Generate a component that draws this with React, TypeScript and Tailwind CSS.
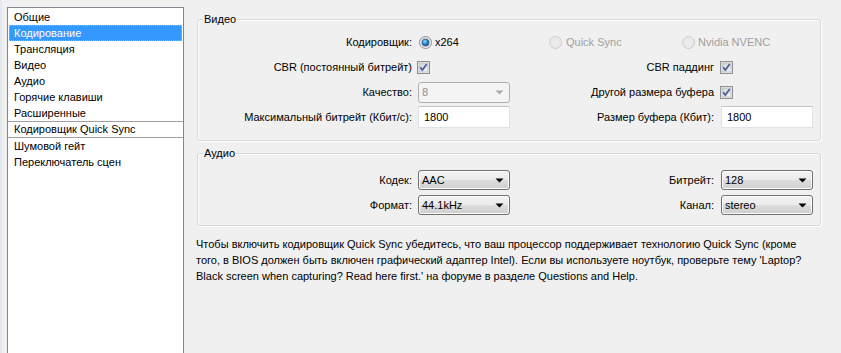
import React from "react"

const navItems = [
  "Общие",
  "Кодирование",
  "Трансляция",
  "Видео",
  "Аудио",
  "Горячие клавиши",
  "Расширенные",
]

function Radio({ checked, disabled }: { checked?: boolean; disabled?: boolean }) {
  return (
    <svg width="13" height="13" viewBox="0 0 13 13" className="shrink-0">
      <defs>
        <linearGradient id="rbg" x1="0" y1="0" x2="1" y2="1">
          <stop offset="0" stopColor="#e6e6e6" />
          <stop offset="1" stopColor="#ffffff" />
        </linearGradient>
        <radialGradient id="rdot" cx="0.4" cy="0.35" r="0.7">
          <stop offset="0" stopColor="#9be0ff" />
          <stop offset="0.5" stopColor="#2a8fd0" />
          <stop offset="1" stopColor="#0b4d86" />
        </radialGradient>
      </defs>
      <circle cx="6.5" cy="6.5" r="6" fill={disabled ? "#f4f4f4" : "url(#rbg)"} stroke={disabled ? "#c9c9c9" : "#8e8f8f"} />
      {!disabled && <circle cx="6.5" cy="6.5" r="4.5" fill="none" stroke="#d0d0d0" strokeWidth="1" />}
      {disabled && <circle cx="6.5" cy="6.5" r="4.5" fill="#ececec" stroke="#e2e2e2" strokeWidth="1" />}
      {checked && <circle cx="6.5" cy="6.5" r="3.5" fill="url(#rdot)" stroke="#1b4e79" strokeWidth="0.6" />}
    </svg>
  )
}

function Checkbox() {
  return (
    <svg width="13" height="13" viewBox="0 0 13 13" className="shrink-0">
      <defs>
        <linearGradient id="cbg" x1="0" y1="0" x2="1" y2="1">
          <stop offset="0" stopColor="#cbcfd5" />
          <stop offset="1" stopColor="#f6f6f6" />
        </linearGradient>
      </defs>
      <rect x="0.5" y="0.5" width="12" height="12" fill="#f4f4f4" stroke="#8e8f8f" />
      <rect x="2" y="2" width="9" height="9" fill="url(#cbg)" stroke="#b7bcc3" strokeWidth="0.8" />
      <path d="M3.2 6.3 L5.3 9 L9.8 3" fill="none" stroke="#4a5f97" strokeWidth="1.7" />
    </svg>
  )
}

function Arrow({ disabled }: { disabled?: boolean }) {
  return (
    <svg width="9" height="5" viewBox="0 0 9 5" className="shrink-0">
      <path d="M0.5 0.5 L8.5 0.5 L4.5 4.5 Z" fill={disabled ? "#a8a8a8" : "#000"} />
    </svg>
  )
}

function Combo({ value, disabled }: { value: string; disabled?: boolean }) {
  if (disabled) {
    return (
      <div className="flex h-[21px] w-[92px] items-center justify-between rounded-[3px] border border-[#adb2b5] bg-[#f4f4f4] pl-[3px] pr-[5px] text-[#8d8d8d]">
        <span>{value}</span>
        <Arrow disabled />
      </div>
    )
  }
  return (
    <div className="flex h-[20px] w-[92px] items-center justify-between rounded-[3px] border border-[#707070] bg-[linear-gradient(#f2f2f2_0%,#ebebeb_50%,#dddddd_50%,#cfcfcf_100%)] pl-[3px] pr-[5px] shadow-[inset_0_0_0_1px_#fcfcfc]">
      <span>{value}</span>
      <Arrow />
    </div>
  )
}

function Edit({ value }: { value: string }) {
  return (
    <div className="flex h-[22px] w-[92px] items-center border border-[#dfe3e8] border-t-[#c3c7cc] bg-white pl-[5px]">
      {value}
    </div>
  )
}

function Row({ label, left, rightLabel, right }: { label: string; left: React.ReactNode; rightLabel?: string; right?: React.ReactNode }) {
  return (
    <div className="flex h-[22px] items-center">
      <div className="w-[214px] shrink-0 text-right">{label}</div>
      <div className="ml-[6px] w-[92px] shrink-0 flex items-center">{left}</div>
      <div className="w-[204px] shrink-0 text-right">{rightLabel}</div>
      <div className="ml-[7px] w-[92px] shrink-0 flex items-center">{right}</div>
    </div>
  )
}

export default function App() {
  return (
    <div className="flex h-[353px] w-[841px] overflow-hidden bg-[#f0f0f0] font-['Liberation_Sans',Arial,sans-serif] text-[11px] text-black">
      <div className="w-[2px] shrink-0 bg-[#e2e9f0]" />

      {/* list */}
      <div className="ml-[5px] mt-[7px] w-[177px] shrink-0 border border-b-0 border-[#828790] bg-white px-[1px] pt-[1px]">
        {navItems.map((item) =>
          item === "Кодирование" ? (
            <div key={item} className="flex h-[16px] items-center border border-dotted border-[#f2a65a] bg-[#3399ff] pl-[4px] text-white">
              {item}
            </div>
          ) : (
            <div key={item} className="flex h-[16px] items-center pl-[5px]">
              {item}
            </div>
          )
        )}
        <div className="-mx-[1px] flex h-[17px] items-center border-y border-[#a0a0a0] pl-[6px]">Кодировщик Quick Sync</div>
        <div className="flex h-[16px] items-center pl-[5px]">Шумовой гейт</div>
        <div className="flex h-[16px] items-center pl-[5px]">Переключатель сцен</div>
      </div>

      {/* settings */}
      <div className="ml-[12px] flex w-[626px] shrink-0 flex-col pt-[13px]">
        <fieldset className="ml-[1px] w-[624px] rounded-[3px] border border-[#d5d9de] px-0 pb-[12px] pt-[5px] shadow-[inset_1px_1px_0_#fff,1px_1px_0_#fff]">
          <legend className="ml-[5px] bg-[#f0f0f0] px-[1px] leading-[13px]">Видео</legend>
          <div className="flex flex-col gap-[3px]">
            <div className="flex h-[22px] items-center">
              <div className="w-[214px] shrink-0 text-right">Кодировщик:</div>
              <div className="ml-[7px] flex w-[130px] shrink-0 items-center gap-[3px]">
                <Radio checked />
                <span>x264</span>
              </div>
              <div className="flex w-[133px] shrink-0 items-center gap-[4px] text-[#a0a0a0]">
                <Radio disabled />
                <span>Quick Sync</span>
              </div>
              <div className="flex items-center gap-[3px] text-[#a0a0a0]">
                <Radio disabled />
                <span>Nvidia NVENC</span>
              </div>
            </div>
            <Row
              label="CBR (постоянный битрейт)"
              left={<div className="-ml-[1px]"><Checkbox /></div>}
              rightLabel="CBR паддинг"
              right={<div className="-ml-[1px]"><Checkbox /></div>}
            />
            <Row
              label="Качество:"
              left={<Combo value="8" disabled />}
              rightLabel="Другой размера буфера"
              right={<div className="-ml-[1px]"><Checkbox /></div>}
            />
            <Row
              label="Максимальный битрейт (Кбит/с):"
              left={<Edit value="1800" />}
              rightLabel="Размер буфера (Кбит):"
              right={<Edit value="1800" />}
            />
          </div>
        </fieldset>

        <fieldset className="ml-[1px] mt-[6px] w-[624px] rounded-[3px] border border-[#d5d9de] px-0 pb-[9px] pt-[9px] shadow-[inset_1px_1px_0_#fff,1px_1px_0_#fff]">
          <legend className="ml-[5px] bg-[#f0f0f0] px-[1px] leading-[13px]">Аудио</legend>
          <div className="flex flex-col gap-[3px]">
            <Row label="Кодек:" left={<Combo value="AAC" />} rightLabel="Битрейт:" right={<Combo value="128" />} />
            <Row label="Формат:" left={<Combo value="44.1kHz" />} rightLabel="Канал:" right={<Combo value="stereo" />} />
          </div>
        </fieldset>

        <p className="mt-[10px] w-[620px] leading-[16px]">
          Чтобы включить кодировщик Quick Sync убедитесь, что ваш процессор поддерживает технологию Quick Sync (кроме
          того, в BIOS должен быть включен графический адаптер Intel). Если вы используете ноутбук, проверьте тему 'Laptop?
          Black screen when capturing? Read here first.' на форуме в разделе Questions and Help.
        </p>
      </div>
    </div>
  )
}
